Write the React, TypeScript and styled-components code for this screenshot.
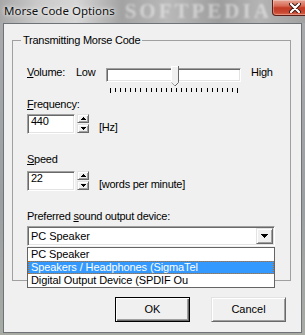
import React from "react";
import styled, { createGlobalStyle } from "styled-components";

const GlobalStyle = createGlobalStyle`
  html, body {
    margin: 0;
    padding: 0;
  }
  body {
    width: 305px;
    height: 335px;
    overflow: hidden;
    background: #a2a5a8;
    font-family: "Liberation Sans", Arial, sans-serif;
  }
`;

const Frame = styled.div`
  width: 305px;
  height: 335px;
  display: flex;
  flex-direction: column;
  background: linear-gradient(180deg, #a9abad 0%, #9c9fa2 60%, #a7aba4 100%);
`;

const TitleBar = styled.div`
  height: 23px;
  flex: none;
  display: flex;
  align-items: flex-start;
  overflow: hidden;
  background: linear-gradient(
    90deg,
    #a7a7a7 0%,
    #c9c9c9 12%,
    #d6d6d6 25%,
    #a3a3a3 40%,
    #b9b9b9 55%,
    #9d9d9d 72%,
    #b4b4b4 85%,
    #a1a1a1 100%
  );
`;

const Title = styled.span`
  margin: 3px 0 0 4px;
  font-family: "Noto Sans", "Open Sans", sans-serif;
  font-size: 11.5px;
  line-height: 15px;
  color: #101010;
  text-shadow: 0 0 6px rgba(255, 255, 255, 0.9), 0 0 3px rgba(255, 255, 255, 0.8);
  white-space: nowrap;
`;

const Watermark = styled.span`
  flex: 1;
  margin-left: 10px;
  font-family: "Liberation Serif", serif;
  font-weight: bold;
  font-size: 21px;
  line-height: 23px;
  letter-spacing: 3px;
  color: rgba(255, 255, 255, 0.45);
  filter: blur(1.2px);
  white-space: nowrap;
`;

const CloseButton = styled.div`
  width: 47px;
  height: 16px;
  margin-right: 2px;
  flex: none;
  box-sizing: border-box;
  display: flex;
  align-items: center;
  justify-content: center;
  border: 1px solid #5c1d16;
  border-top: none;
  border-radius: 0 0 4px 4px;
  background: linear-gradient(180deg, #e7a596 0%, #d76a55 40%, #c23b25 52%, #c84630 80%, #d9684c 100%);
  box-shadow: inset 0 0 0 1px rgba(255, 255, 255, 0.3);
`;

const Client = styled.div`
  flex: 1;
  margin: 0 3px 2px 3px;
  border: 1px solid #6f7377;
  background: #f0f0f0;
  display: flex;
  flex-direction: column;
  font-size: 11px;
  letter-spacing: -0.25px;
  color: #000;
`;

const GroupBox = styled.fieldset`
  margin: 10px 10px 0 8px;
  padding: 19px 13px 34px 8px;
  border: 1px solid #a0a0a0;
  min-width: 0;
`;

const Legend = styled.legend`
  padding: 0 2px;
  line-height: 13px;
`;

const Body = styled.div`
  padding-left: 6px;
  display: flex;
  flex-direction: column;
`;

const SliderRow = styled.div`
  display: flex;
  align-items: flex-start;
  height: 26px;
`;

const Text = styled.span<{ $w?: number; $ml?: number }>`
  line-height: 13px;
  white-space: nowrap;
  ${(p) => (p.$w ? `width: ${p.$w}px; flex: none;` : "")}
  ${(p) => (p.$ml ? `margin-left: ${p.$ml}px;` : "")}
`;

const FieldLabel = styled.div<{ $mt: number }>`
  margin-top: ${(p) => p.$mt}px;
  line-height: 13px;
`;

const Slider = styled.div`
  position: relative;
  width: 135px;
  height: 26px;
  flex: none;
`;

const Track = styled.div`
  margin-top: 2px;
  height: 14px;
  box-sizing: border-box;
  background: #fff;
  border-style: solid;
  border-width: 1px;
  border-color: #a0a0a0 #fff #fff #a0a0a0;
  box-shadow: inset 1px 1px 0 #696969, inset -1px -1px 0 #e3e3e3;
`;

const Ticks = styled.svg`
  display: block;
  margin-top: 6px;
`;

const Thumb = styled.svg`
  position: absolute;
  left: 65px;
  top: 0;
`;

const SpinRow = styled.div<{ $mt: number }>`
  display: flex;
  align-items: flex-start;
  height: 20px;
  margin-top: ${(p) => p.$mt}px;
`;

const SpinEdit = styled.div`
  width: 48px;
  height: 20px;
  box-sizing: border-box;
  background: #fff;
  border-style: solid;
  border-width: 1px;
  border-color: #a0a0a0 #fff #fff #a0a0a0;
  box-shadow: inset 1px 1px 0 #696969, inset -1px -1px 0 #e3e3e3;
  padding-left: 3px;
  line-height: 13px;
  flex: none;
`;

const SpinButtons = styled.div`
  margin-left: 2px;
  width: 12px;
  display: flex;
  flex-direction: column;
  gap: 1px;
  flex: none;
`;

const RaisedButton = styled.div`
  box-sizing: border-box;
  background: #f0f0f0;
  border-style: solid;
  border-width: 1px;
  border-color: #e3e3e3 #696969 #696969 #e3e3e3;
  box-shadow: inset 1px 1px 0 #fff, inset -1px -1px 0 #a0a0a0;
  display: flex;
  align-items: center;
  justify-content: center;
`;

const SpinButton = styled(RaisedButton)`
  height: 9px;
`;

const Unit = styled.span`
  align-self: flex-end;
  margin-left: 10px;
  line-height: 13px;
  white-space: nowrap;
`;

const ComboWrap = styled.div`
  position: relative;
  margin-top: 3px;
  width: 248px;
`;

const Combo = styled.div`
  height: 20px;
  box-sizing: border-box;
  background: #fff;
  border-style: solid;
  border-width: 1px;
  border-color: #a0a0a0 #fff #fff #a0a0a0;
  box-shadow: inset 1px 1px 0 #696969, inset -1px -1px 0 #e3e3e3;
  display: flex;
  align-items: center;
  padding: 1px 1px 1px 3px;
  letter-spacing: -0.05px;
`;

const ComboText = styled.span`
  flex: 1;
  line-height: 13px;
`;

const DropButton = styled(RaisedButton)`
  width: 17px;
  height: 16px;
`;

const DropList = styled.div`
  position: absolute;
  top: calc(100% + 1px);
  left: 0;
  width: 248px;
  box-sizing: border-box;
  border: 1px solid #646464;
  background: #fff;
  letter-spacing: -0.1px;
  z-index: 2;
`;

const ListItem = styled.div<{ $selected?: boolean }>`
  height: 13px;
  line-height: 13px;
  box-sizing: border-box;
  padding-left: 3px;
  white-space: nowrap;
  overflow: hidden;
  ${(p) =>
    p.$selected
      ? `background: #3399ff; color: #fff; border: 1px dotted #cc6600; padding-left: 2px; line-height: 11px;`
      : ""}
`;

const ButtonRow = styled.div`
  display: flex;
  justify-content: flex-end;
  gap: 21px;
  margin-top: 16px;
  padding-right: 15px;
`;

const PushButton = styled(RaisedButton)<{ $default?: boolean }>`
  width: 75px;
  height: 25px;
  line-height: 13px;
  letter-spacing: 0;
  ${(p) =>
    p.$default
      ? `border-color: #000; box-shadow: inset 1px 1px 0 #fff, inset -1px -1px 0 #696969, inset -2px -2px 0 #a0a0a0;`
      : ""}
`;

const UpArrow = () => (
  <svg width="5" height="3" shapeRendering="crispEdges">
    <rect x="2" y="0" width="1" height="1" fill="#000" />
    <rect x="1" y="1" width="3" height="1" fill="#000" />
    <rect x="0" y="2" width="5" height="1" fill="#000" />
  </svg>
);

const DownArrow = ({ w = 5 }: { w?: number }) => {
  const rows = Math.ceil(w / 2);
  return (
    <svg width={w} height={rows} shapeRendering="crispEdges">
      {Array.from({ length: rows }, (_, i) => (
        <rect key={i} x={i} y={i} width={w - 2 * i} height="1" fill="#000" />
      ))}
    </svg>
  );
};

const Spin = ({ value }: { value: string }) => (
  <>
    <SpinEdit>{value}</SpinEdit>
    <SpinButtons>
      <SpinButton>
        <UpArrow />
      </SpinButton>
      <SpinButton>
        <DownArrow />
      </SpinButton>
    </SpinButtons>
  </>
);

const tickXs = Array.from({ length: 26 }, (_, i) => Math.round(4 + (i * 127) / 25));

export default function App() {
  return (
    <>
      <GlobalStyle />
      <Frame>
        <TitleBar>
          <Title>Morse Code Options</Title>
          <Watermark>SOFTPEDIA</Watermark>
          <CloseButton>
            <svg width="12" height="10" viewBox="0 0 12 10">
              <path d="M2 1 L10 9 M10 1 L2 9" stroke="#3a1410" strokeWidth="4" strokeLinecap="round" />
              <path d="M2 1 L10 9 M10 1 L2 9" stroke="#fff" strokeWidth="2.2" strokeLinecap="round" />
            </svg>
          </CloseButton>
        </TitleBar>
        <Client>
          <GroupBox>
            <Legend>Transmitting Morse Code</Legend>
            <Body>
              <SliderRow>
                <Text $w={49}>
                  <u>V</u>olume:
                </Text>
                <Text $w={30}>Low</Text>
                <Slider>
                  <Track />
                  <Ticks width="135" height="5" shapeRendering="crispEdges">
                    {tickXs.map((x, i) => (
                      <rect
                        key={i}
                        x={x}
                        y={0}
                        width={1}
                        height={i === 0 || i === tickXs.length - 1 ? 5 : 4}
                        fill="#000"
                      />
                    ))}
                  </Ticks>
                  <Thumb width="8" height="21" shapeRendering="crispEdges">
                    <polygon points="0,0 8,0 8,16 4,20 0,16" fill="#f0f0f0" />
                    <path d="M0.5 16 V0.5 H7" stroke="#fff" fill="none" />
                    <path d="M7.5 0 V16.5 L4 20" stroke="#696969" fill="none" shapeRendering="auto" />
                    <path d="M0.5 16.5 L4 20" stroke="#a0a0a0" fill="none" shapeRendering="auto" />
                  </Thumb>
                </Slider>
                <Text $ml={10}>High</Text>
              </SliderRow>

              <FieldLabel $mt={6}>
                <u>F</u>requency:
              </FieldLabel>
              <SpinRow $mt={3}>
                <Spin value="440" />
                <Unit>[Hz]</Unit>
              </SpinRow>

              <FieldLabel $mt={19}>
                <u>S</u>peed
              </FieldLabel>
              <SpinRow $mt={5}>
                <Spin value="22" />
                <Unit>[words per minute]</Unit>
              </SpinRow>

              <FieldLabel $mt={19}>
                Preferred <u>s</u>ound output device:
              </FieldLabel>
              <ComboWrap>
                <Combo>
                  <ComboText>PC Speaker</ComboText>
                  <DropButton>
                    <DownArrow w={7} />
                  </DropButton>
                </Combo>
                <DropList>
                  <ListItem>PC Speaker</ListItem>
                  <ListItem $selected>Speakers / Headphones (SigmaTel</ListItem>
                  <ListItem>Digital Output Device (SPDIF Ou</ListItem>
                </DropList>
              </ComboWrap>
            </Body>
          </GroupBox>
          <ButtonRow>
            <PushButton $default>OK</PushButton>
            <PushButton>Cancel</PushButton>
          </ButtonRow>
        </Client>
      </Frame>
    </>
  );
}
